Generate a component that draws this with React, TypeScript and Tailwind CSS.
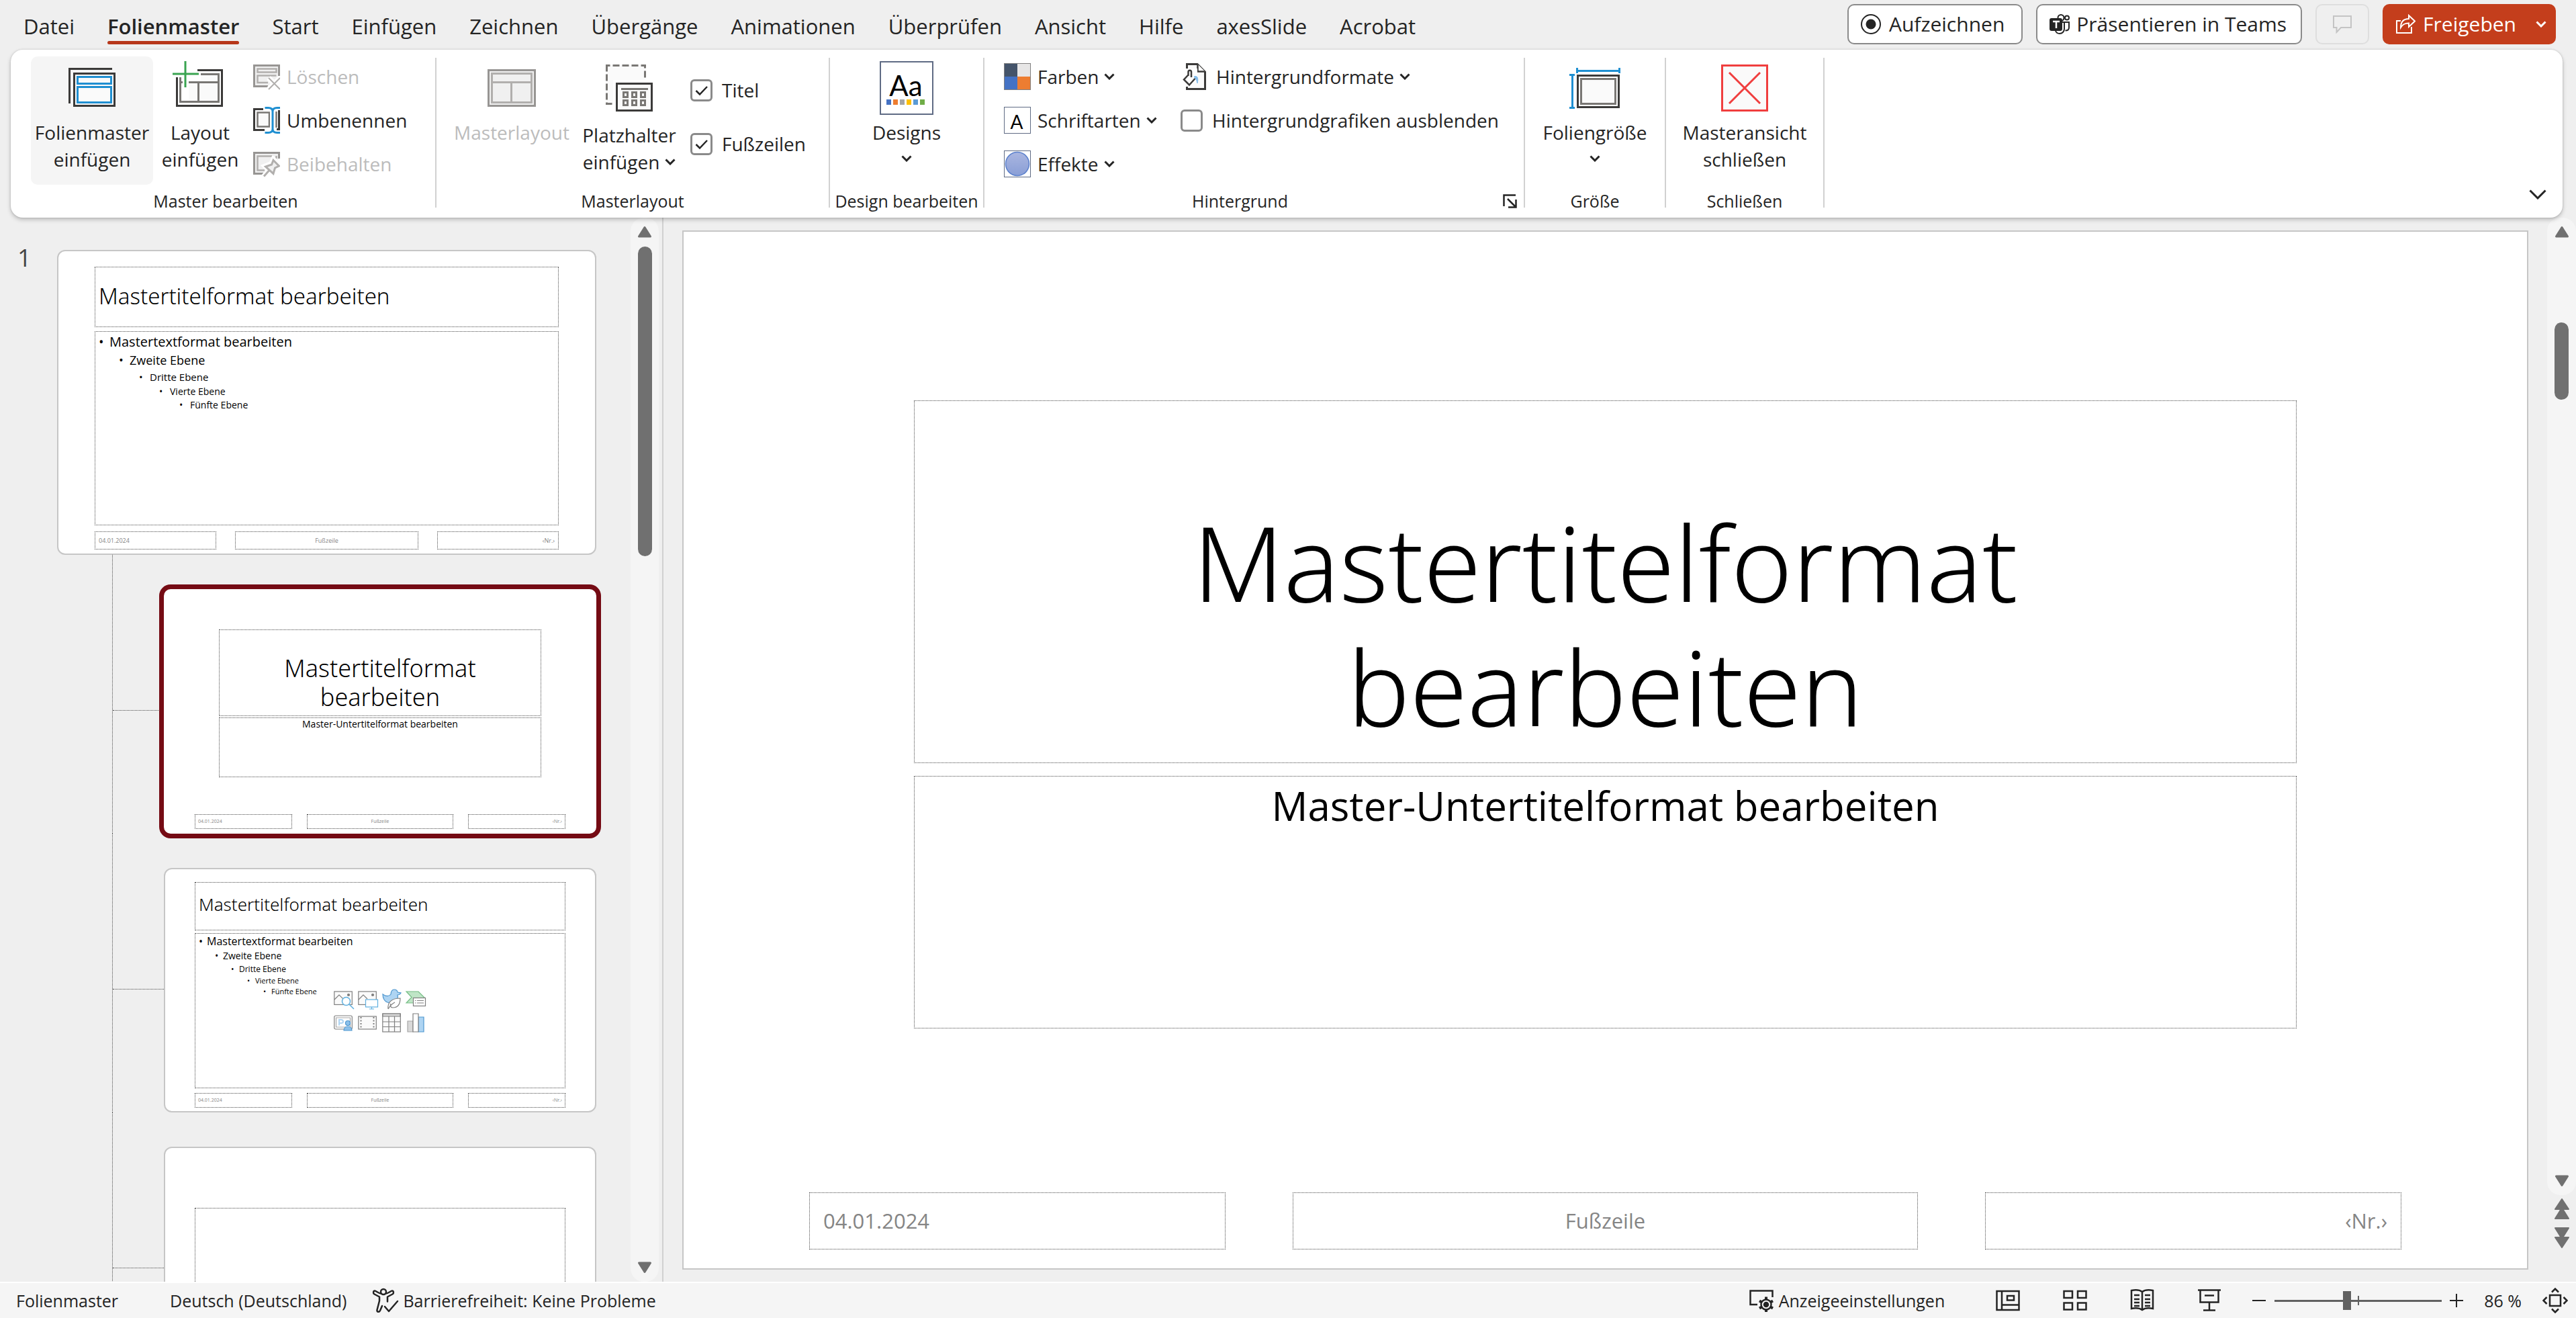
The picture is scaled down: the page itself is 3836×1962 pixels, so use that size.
import type { ReactNode } from "react";

const DARK = "#3b3a39";
const BLUE = "#1f8fd1";

/* ---------- small shared glyphs ---------- */

function Chevron({ className = "" }: { className?: string }) {
  return (
    <svg className={`h-[10px] w-[16px] shrink-0 ${className}`} viewBox="0 0 16 10" fill="none" stroke="currentColor" strokeWidth="3">
      <path d="M1.5 1.5 8 8l6.5-6.5" />
    </svg>
  );
}

function Triangle({ down = false }: { down?: boolean }) {
  return (
    <svg className="h-[18px] w-[22px]" viewBox="0 0 22 18" fill="#707070" stroke="#707070" strokeWidth="3" strokeLinejoin="round">
      <path d={down ? "M2.500 2h17L11 15.500z" : "M2.500 16h17L11 2.500z"} />
    </svg>
  );
}

/* ---------- large ribbon icons (80 x 80) ---------- */

function BigIcon({ children }: { children: ReactNode }) {
  return (
    <svg className="h-20 w-20 shrink-0 overflow-visible" viewBox="0 0 80 80" fill="none" strokeWidth="3">
      {children}
    </svg>
  );
}

function MasterInsertIcon() {
  return (
    <BigIcon>
      <path d="M6.500 63V11.500H70" stroke={DARK} />
      <rect x="13.500" y="18.500" width="60" height="48" fill="#fafafa" stroke={DARK} />
      <rect x="18.500" y="23.500" width="50" height="10" fill="#fafafa" stroke={BLUE} />
      <rect x="18.500" y="38.500" width="50" height="23" fill="#fafafa" stroke={BLUE} />
    </BigIcon>
  );
}

function LayoutInsertIcon() {
  return (
    <BigIcon>
      <path d="M10 24v38h58V19H41V31H23v31H10z" fill="#fafafa" />
      <path d="M5.500 24v42.500h67v-53H36" stroke={DARK} />
      <path d="M10.500 24v36.500h57v-41H41M23 31.500h45M37.500 31.500v29M10 31.500h4" stroke="#797774" />
      <path d="M18 0v39M-1 19h39" stroke="#3aa451" strokeWidth="3" />
    </BigIcon>
  );
}

function MasterLayoutIcon() {
  return (
    <BigIcon>
      <rect x="5.500" y="13.500" width="69" height="53" fill="#f0f0f0" stroke="#979593" />
      <path d="M10.500 18.500h59v43h-59zM10.500 31.500h59M39.500 31.500v30" stroke="#b1afad" />
    </BigIcon>
  );
}

function PlaceholderIcon() {
  return (
    <BigIcon>
      <rect x="6.500" y="6.500" width="57" height="57" fill="#fafafa" stroke="#797774" strokeDasharray="10 4" strokeDashoffset="5" />
      <rect x="16" y="28" width="62" height="50" fill="#fff" />
      <rect x="21.500" y="33.500" width="52" height="40" fill="#fafafa" stroke={DARK} />
      <path d="M28 41.500h40M31.500 46.500h6v7h-6zM44.500 46.500h6v7h-6zM57.500 46.500h6v7h-6zM31.500 58.500h6v7h-6zM44.500 58.500h6v7h-6zM57.500 58.500h6v7h-6z" stroke="#797774" />
    </BigIcon>
  );
}

const ACCENTS = ["#4472c4", "#ed7d31", "#a5a5a5", "#ffc000", "#5b9bd5", "#70ad47"];

function DesignsIcon() {
  return (
    <BigIcon>
      <rect x="1" y="1" width="78" height="78" fill="#fff" stroke="#5f6b84" strokeWidth="2" />
      <text x="39" y="52" textAnchor="middle" fill="#000" stroke="none" fontFamily="Lato, sans-serif" fontSize="42">
        Aa
      </text>
      {ACCENTS.map((c, i) => (
        <rect key={c} x={10 + i * 10} y="57" width="7" height="8" fill={c} />
      ))}
    </BigIcon>
  );
}

function SlideSizeIcon() {
  return (
    <BigIcon>
      <rect x="14.500" y="21.500" width="61" height="47" fill="#fff" stroke={DARK} />
      <rect x="19.500" y="26.500" width="51" height="37" fill="#fafafa" stroke="#797774" />
      <path d="M14 14.500h62M13.500 10v8M76.500 10v8M6.500 20v50M2 20.500h8M2 69.500h8" stroke={BLUE} />
    </BigIcon>
  );
}

function CloseMasterIcon() {
  return (
    <BigIcon>
      <rect x="6.500" y="6.500" width="67" height="67" fill="#fafafa" stroke="#f03e3e" />
      <path d="m17 17 46 46M63 17 17 63" stroke="#f03e3e" />
    </BigIcon>
  );
}

/* ---------- small ribbon icons (40 x 40) ---------- */

function SmallIcon({ children }: { children: ReactNode }) {
  return (
    <svg className="h-10 w-10 shrink-0" viewBox="0 0 40 40" fill="none" strokeWidth="2.500">
      {children}
    </svg>
  );
}

function DeleteIcon() {
  return (
    <SmallIcon>
      <path d="M38.500 19V3.500h-37v31H22" fill="#f0f0f0" stroke="#979593" strokeWidth="3" />
      <path d="M6.500 8.500h28v5h-28zM22 29H6.500V18.500h28" stroke="#b1afad" />
      <path d="m23 22 17 17M40 22 23 39" stroke="#fff" strokeWidth="8" />
      <path d="m23 22 17 17M40 22 23 39" stroke="#b1afad" strokeWidth="2" />
    </SmallIcon>
  );
}

function RenameIcon() {
  return (
    <SmallIcon>
      <path d="M15 3.500H1.500v31H17M38.500 5v28.500H35" stroke={DARK} strokeWidth="3" />
      <path d="M24 8.500H6.500v21H24z" fill="#fafafa" stroke="#797774" />
      <path d="M34.500 7v24" stroke="#797774" />
      <path d="M29 4v32" stroke="#fff" strokeWidth="8" />
      <path d="M17.500 1.500h5c4 0 6.500 2 6.500 5.500v26c0 3.500-2.500 5.500-6.500 5.500h-5M40 1.500h-4.500C31.500 1.500 29 3.500 29 7v26c0 3.500 2.500 5.500 6.500 5.500H40" stroke={BLUE} strokeWidth="3" />
    </SmallIcon>
  );
}

function PreserveIcon() {
  return (
    <SmallIcon>
      <path d="M38.500 12V3.500h-37v31H15" fill="#f0f0f0" stroke="#979593" strokeWidth="3" />
      <path d="M30 8.500H6.500v21H17M34.500 8v4" stroke="#b1afad" />
      <path d="M30 13.500 38.500 22l-6 3-3 9.500L18 23.500l9-3.500zM23.500 30 16 38.500" fill="#fff" stroke="#fff" strokeWidth="8" />
      <path d="M30 14.500 38.500 23l-6 3-2.500 8.500L18.500 24l9-3zM23.500 30 16 38.500" fill="#f0f0f0" stroke="#b1afad" strokeWidth="3" />
    </SmallIcon>
  );
}

function ColorsIcon() {
  return (
    <SmallIcon>
      <path fill="#44546a" d="M0 0h20v20H0z" />
      <path fill="#e7e6e6" d="M20 0h20v20H20z" />
      <path fill="#4472c4" d="M0 20h20v20H0z" />
      <path fill="#ed7d31" d="M20 20h20v20H20z" />
      <rect x=".5" y=".5" width="39" height="39" stroke="#7f7f7f" strokeWidth="1" />
    </SmallIcon>
  );
}

function FontsIcon() {
  return (
    <SmallIcon>
      <rect x=".5" y=".5" width="39" height="39" fill="#fff" stroke="#5f6b84" strokeWidth="1" />
      <text x="19" y="33" textAnchor="middle" fill="#000" fontFamily="Lato, sans-serif" fontSize="28">
        A
      </text>
    </SmallIcon>
  );
}

function EffectsIcon() {
  return (
    <SmallIcon>
      <defs>
        <linearGradient id="effect-fill" x1="0" y1="0" x2="0" y2="1">
          <stop offset="0" stopColor="#aab6e0" />
          <stop offset="1" stopColor="#899ed6" />
        </linearGradient>
      </defs>
      <rect x=".5" y=".5" width="39" height="39" fill="#fff" stroke="#5f6b84" strokeWidth="1" />
      <circle cx="20" cy="20" r="17.500" fill="url(#effect-fill)" stroke="#5b80cc" strokeWidth="1.500" />
    </SmallIcon>
  );
}

function BackgroundIcon() {
  return (
    <SmallIcon>
      <path d="M9.500 8V1.500H25L36.500 13v25.500h-27V35" fill="#fafafa" stroke={DARK} strokeWidth="3" />
      <path d="M25.500 1.500V12.500H36.500" fill="#fff" stroke={DARK} strokeWidth="2.500" />
      <path d="M5 24.500 14 33l9-10V10h-12z" fill="#fff" stroke="#fff" strokeWidth="4" />
      <path d="M20 20c5-2 7 2 5 10-1-3-1-6-3-7z" fill="#83bdec" stroke="#83bdec" strokeWidth="1" />
      <path d="M11.500 19V13c0-3 4.500-3 4.500 0v8M11.500 17.500 5 24.500l8 8 8.500-9.500" stroke={DARK} />
    </SmallIcon>
  );
}

/* ---------- ribbon building blocks ---------- */

function Group({ label, width, children, launcher = false }: { label: string; width: string; children: ReactNode; launcher?: boolean }) {
  return (
    <>
      <section aria-label={label} className={`flex shrink-0 flex-col pt-[10px] ${width}`}>
        <div className="flex h-[198px] items-start">{children}</div>
        <div className="flex h-[34px] items-center">
          <span className="flex-1 text-center text-[25px] leading-[34px] whitespace-nowrap">{label}</span>
          {launcher && (
            <button type="button" aria-label="Hintergrund formatieren" className="flex w-[42px] justify-center">
              <svg className="h-[21px] w-[21px]" viewBox="0 0 21 21" fill="none" stroke="currentColor" strokeWidth="2.500">
                <path d="M1.500 18V1.500H19M7 7l12 12M19.500 8v11.500H8" />
              </svg>
            </button>
          )}
        </div>
      </section>
      <div className="mt-3 h-[223px] w-[2px] shrink-0 bg-[#d1d1d1]" />
    </>
  );
}

function BigButton({ icon, lines, className = "", iconArea = "h-[93px]", muted = false, chevron }: { icon: ReactNode; lines: string[]; className?: string; iconArea?: string; muted?: boolean; chevron?: "below" | "inline" }) {
  return (
    <button type="button" disabled={muted} className={`flex h-[191px] flex-col items-center rounded-[10px] ${muted ? "text-[#bcbcbc]" : ""} ${className}`}>
      <span className={`flex shrink-0 pt-[7px] ${iconArea}`}>{icon}</span>
      {lines.map((l, i) => (
        <span key={l} className="flex items-center gap-2 text-[28px] leading-10 whitespace-nowrap">
          {l}
          {chevron === "inline" && i === lines.length - 1 && <Chevron />}
        </span>
      ))}
      {chevron === "below" && <Chevron className="mt-[14px]" />}
    </button>
  );
}

function SmallButton({ icon, label, muted = false, chevron = false, gap = "gap-[10px]" }: { icon: ReactNode; label: string; muted?: boolean; chevron?: boolean; gap?: string }) {
  return (
    <button type="button" disabled={muted} className={`flex h-10 items-center text-[28px] leading-10 whitespace-nowrap ${gap} ${muted ? "text-[#bcbcbc]" : ""}`}>
      {icon}
      <span className="flex items-center gap-2">
        {label}
        {chevron && <Chevron />}
      </span>
    </button>
  );
}

function Check({ label, checked = false }: { label: string; checked?: boolean }) {
  return (
    <label className="flex items-center gap-[14px] text-[28px] leading-[33px] whitespace-nowrap">
      <span className="grid">
        <input type="checkbox" defaultChecked={checked} className="peer col-start-1 row-start-1 h-[33px] w-[33px] appearance-none rounded-[6px] border-[3px] border-[#8a8a8a] bg-white" />
        <svg className="pointer-events-none invisible col-start-1 row-start-1 h-[33px] w-[33px] peer-checked:visible" viewBox="0 0 33 33" fill="none" stroke="#242424" strokeWidth="2.500">
          <path d="m8.500 17 5.500 5.500L25 11" />
        </svg>
      </span>
      {label}
    </label>
  );
}

/* ---------- header ---------- */

const TABS = ["Datei", "Folienmaster", "Start", "Einfügen", "Zeichnen", "Übergänge", "Animationen", "Überprüfen", "Ansicht", "Hilfe", "axesSlide", "Acrobat"];

function Header() {
  return (
    <header className="flex h-[74px] shrink-0 items-start pr-[30px] pl-[35px]">
      <nav className="flex gap-[49px] pt-[19px]">
        {TABS.map((t) => {
          const active = t === "Folienmaster";
          return (
            <button key={t} type="button" className="flex flex-col text-[31px] leading-10 whitespace-nowrap">
              <span className={active ? "font-semibold" : ""}>{t}</span>
              {active && <span className="mt-[2px] h-[5px] w-full rounded-full bg-[#b7371a]" />}
            </button>
          );
        })}
      </nav>
      <div className="ml-auto flex gap-5 pt-[6px] text-[30px] leading-10 whitespace-nowrap">
        <button type="button" className="flex h-[60px] items-center gap-[12px] rounded-[10px] border-2 border-[#8a8a8a] bg-white pr-[25px] pl-[18px]">
          <svg className="h-[30px] w-[30px]" viewBox="0 0 30 30">
            <circle cx="15" cy="15" r="14" fill="none" stroke="#242424" strokeWidth="2" />
            <circle cx="15" cy="15" r="7.500" fill="#242424" />
          </svg>
          Aufzeichnen
        </button>
        <button type="button" className="flex h-[60px] items-center gap-[10px] rounded-[10px] border-2 border-[#8a8a8a] bg-white pr-[21px] pl-[18px]">
          <svg className="h-[30px] w-[30px]" viewBox="0 0 30 30" fill="none" stroke="#242424" strokeWidth="2">
            <circle cx="17" cy="5.500" r="4.500" />
            <circle cx="26" cy="5.500" r="3" />
            <path d="M18 12h11v8c0 3-2 4.500-5.500 4.500M22 12v10c0 4-3 7-7 7-3 0-5-1.500-6-4" />
            <rect x="1" y="7" width="17" height="17" rx="2" fill="#242424" stroke="#242424" />
            <path d="M5 11h10M10 11v10" stroke="#fff" strokeWidth="2.500" />
          </svg>
          Präsentieren in Teams
        </button>
        <button type="button" aria-label="Kommentare" disabled className="flex h-[60px] w-20 items-center justify-center rounded-[10px] border-2 border-[#dedede]">
          <svg className="h-[28px] w-[28px]" viewBox="0 0 28 28" fill="none" stroke="#c4c4c4" strokeWidth="2">
            <path d="M1 2h26v17H12l-6.500 7V19H1z" />
          </svg>
        </button>
        <button type="button" className="flex h-[60px] items-center gap-[11px] rounded-[10px] bg-[#c43e1c] pr-[14px] pl-[19px] text-white">
          <svg className="h-[30px] w-[30px]" viewBox="0 0 30 30" fill="none" stroke="currentColor" strokeWidth="2">
            <path d="M8 10H2v18h22v-9M20 2l9 8.500L20 19v-5.500c-6 0-9 1.500-12 6.500 0-8 4-13 12-13z" />
          </svg>
          Freigeben
          <Chevron className="ml-[18px]" />
        </button>
      </div>
    </header>
  );
}

function Ribbon() {
  return (
    <div className="z-10 mr-[20px] ml-4 flex h-[250px] shrink-0 rounded-[18px] bg-white pl-2 shadow-[0_3px_6px_rgba(0,0,0,0.22),0_0_3px_rgba(0,0,0,0.15)]">
      <Group label="Master bearbeiten" width="w-[624px]">
        <BigButton icon={<MasterInsertIcon />} lines={["Folienmaster", "einfügen"]} className="ml-[22px] w-[182px] bg-[#f5f5f5]" />
        <BigButton icon={<LayoutInsertIcon />} lines={["Layout", "einfügen"]} className="ml-3 w-[116px]" />
        <div className="ml-[21px] flex flex-col gap-[25px] pt-[10px]">
          <SmallButton icon={<DeleteIcon />} label="Löschen" muted />
          <SmallButton icon={<RenameIcon />} label="Umbenennen" />
          <SmallButton icon={<PreserveIcon />} label="Beibehalten" muted />
        </div>
      </Group>
      <Group label="Masterlayout" width="w-[584px]">
        <BigButton icon={<MasterLayoutIcon />} lines={["Masterlayout"]} className="ml-[22px] w-[180px]" muted />
        <BigButton icon={<PlaceholderIcon />} lines={["Platzhalter", "einfügen"]} className="ml-[10px] w-[150px]" iconArea="h-[97px]" chevron="inline" />
        <div className="ml-4 flex flex-col gap-[47px] pt-[34px]">
          <Check label="Titel" checked />
          <Check label="Fußzeilen" checked />
        </div>
      </Group>
      <Group label="Design bearbeiten" width="w-[228px]">
        <BigButton icon={<DesignsIcon />} lines={["Designs"]} className="w-full" chevron="below" />
      </Group>
      <Group label="Hintergrund" width="w-[803px]" launcher>
        <div className="ml-[29px] flex w-[263px] flex-col gap-[25px] pt-[10px]">
          <SmallButton icon={<ColorsIcon />} label="Farben" chevron />
          <SmallButton icon={<FontsIcon />} label="Schriftarten" chevron />
          <SmallButton icon={<EffectsIcon />} label="Effekte" chevron />
        </div>
        <div className="flex flex-col gap-[25px] pt-[10px]">
          <SmallButton icon={<BackgroundIcon />} label="Hintergrundformate" gap="gap-[13px]" chevron />
          <div className="flex h-10 items-center">
            <Check label="Hintergrundgrafiken ausblenden" />
          </div>
        </div>
      </Group>
      <Group label="Größe" width="w-[208px]">
        <BigButton icon={<SlideSizeIcon />} lines={["Foliengröße"]} className="w-full" chevron="below" />
      </Group>
      <Group label="Schließen" width="w-[234px]">
        <BigButton icon={<CloseMasterIcon />} lines={["Masteransicht", "schließen"]} className="w-full" />
      </Group>
      <button type="button" aria-label="Menüband reduzieren" className="mr-6 mb-[27px] ml-auto self-end">
        <svg className="h-[15px] w-[26px]" viewBox="0 0 26 15" fill="none" stroke="#242424" strokeWidth="3">
          <path d="m1.500 1.500 11.500 11.500L24.500 1.500" />
        </svg>
      </button>
    </div>
  );
}

/* ---------- thumbnails ---------- */

const BOX = "border border-dotted border-[#4a4a4a]";

const LEVELS = ["Mastertextformat bearbeiten", "Zweite Ebene", "Dritte Ebene", "Vierte Ebene", "Fünfte Ebene"];
const LARGE_LEVELS = ["text-[20px] leading-[26px] pl-[5px]", "text-[18px] leading-[28px] pl-[35px]", "text-[15px] leading-[23px] pl-[65px]", "text-[14px] leading-[20px] pl-[95px]", "text-[14px] leading-[20px] pl-[125px]"];
const SMALL_LEVELS = ["text-[16px] leading-[22px] pl-[5px]", "text-[14px] leading-[22px] pl-[29px]", "text-[12px] leading-[18px] pl-[53px]", "text-[11px] leading-[16px] pl-[77px]", "text-[11px] leading-[16px] pl-[101px]"];

function Levels({ styles, marker }: { styles: string[]; marker: string }) {
  return (
    <>
      {LEVELS.map((l, i) => (
        <span key={l} className={`flex ${styles[i]}`}>
          <span className={marker}>•</span>
          {l}
        </span>
      ))}
    </>
  );
}

function FooterRow({ className, cell }: { className: string; cell: string }) {
  return (
    <span className={`grid shrink-0 grid-cols-[2fr_3fr_2fr] text-[#858585] ${className}`}>
      <span className={`flex items-center ${BOX} ${cell}`}>04.01.2024</span>
      <span className={`flex items-center justify-center ${BOX} ${cell}`}>Fußzeile</span>
      <span className={`flex items-center justify-end ${BOX} ${cell}`}>‹Nr.›</span>
    </span>
  );
}

function ContentIcons() {
  return (
    <svg className="absolute inset-0 m-auto h-[66px] w-[138px]" viewBox="0 0 138 66" fill="none" stroke="#7f7f7f" strokeWidth="1.200">
      <g fill="#fafafa">
        <rect x=".8" y="4" width="26.500" height="19.500" />
        <path d="m1 16 7-7 6 6" />
        <circle cx="22" cy="9" r="1.500" fill="#7f7f7f" />
        <rect x="36.800" y="4" width="26.500" height="19.500" />
        <path d="m37 16 7-7 6 6" />
        <circle cx="58" cy="9" r="1.500" fill="#7f7f7f" />
      </g>
      <circle cx="18.500" cy="18.500" r="6" fill="#fff" stroke="#5fb0e0" strokeWidth="1.500" />
      <path d="m23 23 7 7" stroke="#5fb0e0" strokeWidth="1.500" />
      <rect x="47.500" y="16" width="18" height="11" fill="#fff" stroke="#5fb0e0" />
      <path d="M56.500 27v3M53 30h7" stroke="#5fb0e0" />
      <path d="M73 8c5 4 10 3 12 0 0-4 2-7 5-7s5 2 5 4l5 1c-1 2-3 3-5 3 1 4 0 8-4 10-6 3-13 2-16-3-2-3-2-6-2-8z" fill="#aed4f2" stroke="#4f97cf" />
      <path d="M81 30c-1-9 4-16 18-16 0 10-4 14-11 14-3 0-5-3-3-6M81 30c3-5 6-8 10-10" fill="#fff" />
      <path d="M108 4h18l9 9-9 8h-18l8-8.500z" fill="#bfe5c6" stroke="#74bd84" />
      <rect x="118.500" y="13.500" width="18" height="12" fill="#fff" />
      <path d="M121 17.500h1.500M124 17.500h10M121 21h1.500M124 21h10" />
      <rect x=".8" y="40" width="26.500" height="20" rx="2" fill="#fff" />
      <path d="M3.500 43h21v14h-21z" stroke="#a6a6a6" fill="#fff" />
      <path d="M8 54.500V46h3c4 0 4 5 0 5H8" stroke="#aed4f2" strokeWidth="2" />
      <circle cx="21" cy="51" r="3.500" fill="#8cc0ea" stroke="#4f97cf" />
      <path d="M15 62c0-8 12-8 12 0z" fill="#8cc0ea" stroke="#4f97cf" />
      <rect x="36.800" y="41" width="26.500" height="19" fill="#fafafa" />
      <path d="M40.500 42v18M59.500 42v18" strokeDasharray="2 2.500" strokeWidth="2" />
      <rect x="72.800" y="37" width="26.500" height="27" fill="#fafafa" />
      <path d="M73 37h26v4H73z" fill="#d6d6d6" />
      <path d="M73 49h26M73 56.500h26M82 41v23M90.500 41v23" />
      <path d="M110 48h8v16h-8z" fill="#d9d9d9" stroke="#a6a6a6" />
      <path d="M126 42h8v22h-8z" fill="#aed4f2" stroke="#4f97cf" />
      <path d="M118 37h8v27h-8z" fill="#fff" />
    </svg>
  );
}

function LayoutRow({ children }: { children: ReactNode }) {
  return (
    <li className="flex">
      <div className="ml-[167px] w-[77px] shrink-0 border-l border-dotted border-[#4a4a4a]">
        <div className="h-[232px] border-b border-dotted border-[#4a4a4a]" />
      </div>
      <div className="pt-[51px]">{children}</div>
    </li>
  );
}

function ThumbnailPane() {
  return (
    <aside className="flex w-[988px] shrink-0 overflow-hidden border-r-2 border-[#d0d0d0] text-black">
      <ol className="min-h-0 flex-1 pt-[48px]">
        <li className="flex">
          <span className="w-[85px] shrink-0 pl-[26px] text-[36px] leading-[24px] text-[#444]">1</span>
          <button type="button" className="flex h-[454px] w-[803px] flex-col rounded-[12px] border-2 border-[#c6c6c6] bg-white px-[54px] pt-[23px] text-left">
            <span className={`flex h-[90px] shrink-0 items-center pb-[2px] pl-[5px] font-['Noto_Sans'] text-[33px] font-light ${BOX}`}>Mastertitelformat bearbeiten</span>
            <span className={`mt-[6px] flex h-[289px] shrink-0 flex-col pt-[2px] ${BOX}`}>
              <Levels styles={LARGE_LEVELS} marker="w-[16px]" />
            </span>
            <FooterRow className="mt-[9px] h-[27px] gap-[28px] text-[9px]" cell="px-[5px]" />
          </button>
        </li>
        <LayoutRow>
          <button type="button" aria-current="true" className="flex h-[364px] w-[644px] flex-col rounded-[10px] bg-white px-[46px] pt-[60px] ring-[7px] ring-[#750b14]">
            <span className={`mx-[36px] flex h-[129px] shrink-0 items-end justify-center px-5 pb-[6px] text-center font-['Noto_Sans'] text-[36px] leading-[43px] font-light ${BOX}`}>Mastertitelformat bearbeiten</span>
            <span className={`mx-[36px] mt-[2px] h-[89px] shrink-0 text-center text-[14px] leading-[18px] ${BOX}`}>Master-Untertitelformat bearbeiten</span>
            <FooterRow className="mt-[55px] h-[22px] gap-[22px] text-[7px]" cell="px-1" />
          </button>
        </LayoutRow>
        <LayoutRow>
          <button type="button" className="flex h-[364px] w-[644px] flex-col rounded-[12px] border-2 border-[#c6c6c6] bg-white px-[44px] pt-[19px] text-left">
            <span className={`flex h-[72px] shrink-0 items-center pb-[6px] pl-[5px] font-['Noto_Sans'] text-[26px] font-light ${BOX}`}>Mastertitelformat bearbeiten</span>
            <span className={`relative mt-1 flex h-[231px] shrink-0 flex-col ${BOX}`}>
              <Levels styles={SMALL_LEVELS} marker="w-[12px]" />
              <ContentIcons />
            </span>
            <FooterRow className="mt-[7px] h-[22px] gap-[22px] text-[7px]" cell="px-1" />
          </button>
        </LayoutRow>
        <LayoutRow>
          <button type="button" aria-label="Abschnittsüberschrift" className="flex h-[364px] w-[644px] flex-col rounded-[12px] border-2 border-[#c6c6c6] bg-white px-[44px] pt-[89px]">
            <span className={`h-[160px] shrink-0 ${BOX}`} />
          </button>
        </LayoutRow>
      </ol>
      <div className="mr-[5px] flex w-[42px] shrink-0 flex-col items-center rounded-[20px] bg-[#f5f5f5] pt-3 pb-3">
        <Triangle />
        <div className="mt-[13px] h-[461px] w-[21px] rounded-full bg-[#707070]" />
        <span className="mt-auto">
          <Triangle down />
        </span>
      </div>
    </aside>
  );
}

/* ---------- main slide ---------- */

function DoubleArrow({ down = false }: { down?: boolean }) {
  return (
    <svg className="h-[31px] w-[24px]" viewBox="0 0 24 31" fill="#707070" stroke="#707070" strokeWidth="2" strokeLinejoin="round">
      <path d={down ? "M2 1h20L12 17zM2 15h20L12 30z" : "M2 30h20L12 14zM2 16h20L12 1z"} />
    </svg>
  );
}

function Editor() {
  return (
    <main className="flex min-w-0 flex-1 pl-[28px] text-black">
      <div className="mt-[19px] mb-[18px] flex min-w-0 flex-1 flex-col border-2 border-[#c6c6c6] bg-white pt-[251px]">
        <h1 className={`mx-auto flex h-[540px] w-3/4 items-end justify-center px-20 pb-[22px] text-center font-['Noto_Sans'] text-[155px] leading-[185px] font-light ${BOX}`}>Mastertitelformat bearbeiten</h1>
        <p className={`mx-auto mt-[19px] h-[376px] w-3/4 pt-[7px] text-center text-[60px] leading-[72px] ${BOX}`}>Master-Untertitelformat bearbeiten</p>
        <FooterRow className="mx-[187px] mt-auto mb-[28px] h-[85px] gap-[100px] text-[31px]" cell="px-[20px]" />
      </div>
      <div className="ml-[28px] flex w-[43px] shrink-0 flex-col items-center">
        <div className="flex w-full flex-1 flex-col items-center rounded-[20px] bg-[#f5f5f5] pt-3 pb-3">
          <Triangle />
          <div className="mt-[126px] h-[115px] w-[21px] rounded-full bg-[#707070]" />
          <span className="mt-auto">
            <Triangle down />
          </span>
        </div>
        <button type="button" aria-label="Vorherige Folie" className="mt-[5px]">
          <DoubleArrow />
        </button>
        <button type="button" aria-label="Nächste Folie" className="mt-3 mb-[50px]">
          <DoubleArrow down />
        </button>
      </div>
    </main>
  );
}

/* ---------- status bar ---------- */

function ViewIcon({ label, children }: { label: string; children: ReactNode }) {
  return (
    <button type="button" aria-label={label}>
      <svg className="h-[36px] w-[36px]" viewBox="0 0 36 36" fill="none" stroke="#242424" strokeWidth="2.500">
        {children}
      </svg>
    </button>
  );
}

function StatusBar() {
  return (
    <footer className="z-10 flex h-[54px] shrink-0 items-center border-t-2 border-white bg-[#f5f5f5] pr-3 pl-[24px] text-[25px] leading-8 whitespace-nowrap">
      <span>Folienmaster</span>
      <button type="button" className="ml-[77px]">Deutsch (Deutschland)</button>
      <button type="button" className="ml-[38px] flex items-center gap-[6px]">
        <svg className="h-[38px] w-[40px]" viewBox="0 0 40 38" fill="none" stroke="#242424" strokeWidth="2.500" strokeLinejoin="round" strokeLinecap="round">
          <circle cx="17" cy="6" r="4" />
          <path d="M13 8.500C9 8 6 4.500 4 4.500S1 8 3.500 9.500L11 13.500v6L7.500 33c-.5 3 3 4 4.500 1l3-7M21 8.500c4-.5 7-4 9-4s3 3.500.5 5L23 13.500v7" />
          <path d="m19 28 6 7 13-15" />
        </svg>
        Barrierefreiheit: Keine Probleme
      </button>
      <button type="button" className="mr-[76px] ml-auto flex items-center gap-[8px]">
        <svg className="h-[34px] w-[36px]" viewBox="0 0 36 34" fill="none" stroke="#242424" strokeWidth="2.500">
          <path d="M12 23H1.500V2.500h33V12" />
          <circle cx="25" cy="23" r="7.500" />
          <circle cx="25" cy="23" r="3" fill="#242424" />
          <path d="M25 11.500v4M25 30.500v4M15 17.500l3.500 2M31.500 26.500l3.500 2M15 28.500l3.500-2M31.500 19.500l3.500-2" strokeWidth="4" />
        </svg>
        Anzeigeeinstellungen
      </button>
      <div className="flex gap-[64px]">
        <ViewIcon label="Normal">
          <path d="M1.500 4h33v28h-33zM9 4v28M9 24.500h25M17 11h10v6.500H17z" />
        </ViewIcon>
        <ViewIcon label="Foliensortierung">
          <path d="M1.500 4H14v10H1.500zM22 4h12.500v10H22zM1.500 21.500H14v10H1.500zM22 21.500h12.500v10H22z" />
        </ViewIcon>
        <ViewIcon label="Leseansicht">
          <path d="M18 5C14 2 7 2 2 3v27c5-1 12-1 16 2 4-3 11-3 16-2V3c-5-1-12-1-16 2zM18 5v27M6 10h8M6 16h8M6 21h8M6 26h8M22 10h8M22 16h8M22 21h8M22 26h8" />
        </ViewIcon>
        <ViewIcon label="Bildschirmpräsentation">
          <path d="M1 2.500h34M4.500 3v17.500h27V3M11 10.500h14M18 21v11M9 32.500h18" />
        </ViewIcon>
      </div>
      <button type="button" aria-label="Verkleinern" className="ml-[46px]">
        <svg className="h-5 w-5" viewBox="0 0 20 20" stroke="#242424" strokeWidth="2">
          <path d="M0 10h20" />
        </svg>
      </button>
      <span className="relative ml-[13px] flex w-[249px] items-center">
        <span className="absolute left-[124px] h-[14px] w-[2px] bg-[#616161]" />
        <input
          type="range"
          aria-label="Zoom"
          min={0}
          max={100}
          defaultValue={43}
          className="h-7 w-full appearance-none bg-transparent [&::-webkit-slider-runnable-track]:h-[3px] [&::-webkit-slider-runnable-track]:bg-[#616161] [&::-webkit-slider-thumb]:-mt-[13px] [&::-webkit-slider-thumb]:h-7 [&::-webkit-slider-thumb]:w-3 [&::-webkit-slider-thumb]:appearance-none [&::-webkit-slider-thumb]:bg-[#616161]"
        />
      </span>
      <button type="button" aria-label="Vergrößern" className="ml-[12px]">
        <svg className="h-5 w-5" viewBox="0 0 20 20" stroke="#242424" strokeWidth="2">
          <path d="M0 10h20M10 0v20" />
        </svg>
      </button>
      <button type="button" className="ml-[31px]">86 %</button>
      <button type="button" aria-label="An Fenster anpassen" className="ml-[31px]">
        <svg className="h-[38px] w-[38px]" viewBox="0 0 38 38" fill="none" stroke="#242424" strokeWidth="2.500">
          <path d="M11 11h16v16H11zM14 6.500l5-5 5 5M14 31.500l5 5 5-5M6.500 14l-5 5 5 5M31.500 14l5 5-5 5" />
        </svg>
      </button>
    </footer>
  );
}

export default function App() {
  return (
    <div className="flex h-screen flex-col overflow-hidden bg-[#efefef] font-['Open_Sans','Noto_Sans',sans-serif] text-[#242424]">
      <Header />
      <Ribbon />
      <div className="flex min-h-0 flex-1">
        <ThumbnailPane />
        <Editor />
      </div>
      <StatusBar />
    </div>
  );
}
